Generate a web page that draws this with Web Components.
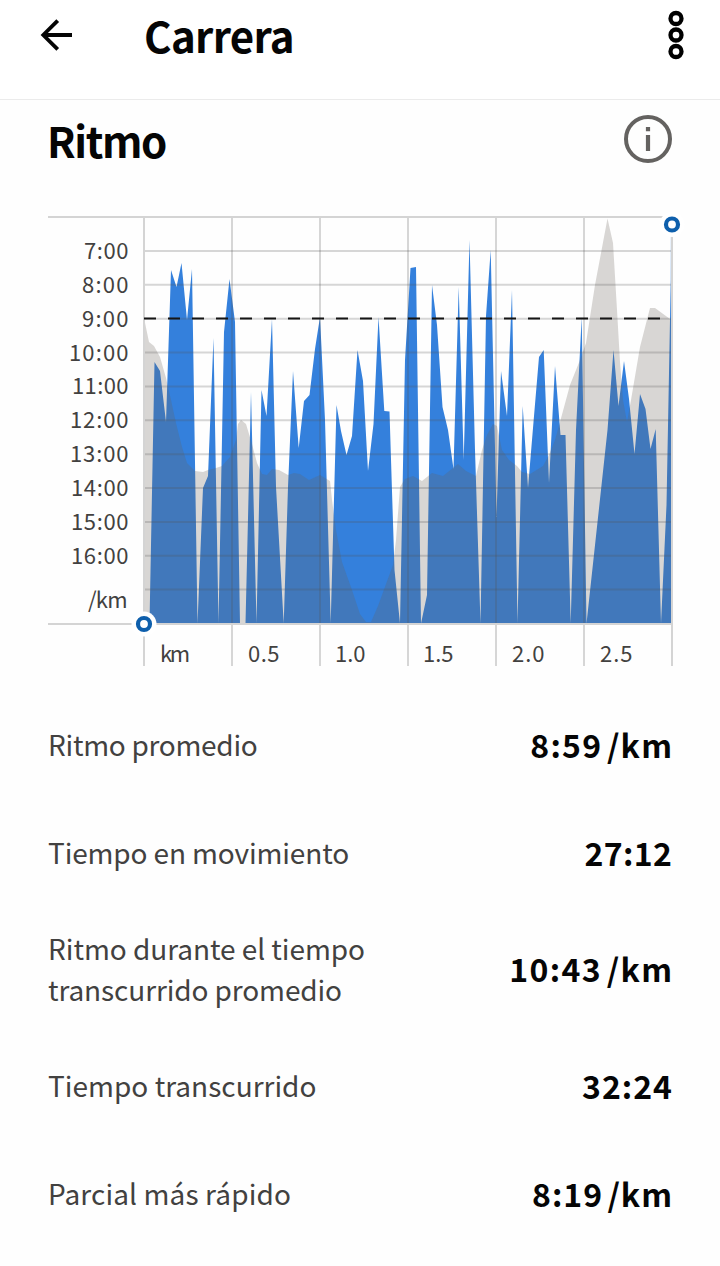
<!DOCTYPE html>
<html lang="es">
<head>
<meta charset="utf-8">
<title>Carrera</title>
<style>
  body { margin: 0; background: #fefefe; font-family: "Noto Sans CJK JP", "Noto Sans", sans-serif; color: #050505; }
</style>
</head>
<body>
<run-screen>
  <app-bar slot="bar"><fit-text width="148">Carrera</fit-text></app-bar>
  <section-title><fit-text width="117">Ritmo</fit-text></section-title>
  <pace-chart></pace-chart>
  <stat-list>
    <stat-row><fit-text width="207.5">Ritmo promedio</fit-text><fit-text slot="value" width="141">8:59 /km</fit-text></stat-row>
    <stat-row><fit-text width="299">Tiempo en movimiento</fit-text><fit-text slot="value" width="86">27:12</fit-text></stat-row>
    <stat-row><fit-text width="315">Ritmo durante el tiempo</fit-text><fit-text width="292">transcurrido promedio</fit-text><fit-text slot="value" width="162">10:43 /km</fit-text></stat-row>
    <stat-row><fit-text width="266.5">Tiempo transcurrido</fit-text><fit-text slot="value" width="89">32:24</fit-text></stat-row>
    <stat-row><fit-text width="241">Parcial más rápido</fit-text><fit-text slot="value" width="139">8:19 /km</fit-text></stat-row>
  </stat-list>
</run-screen>
<script>
const define = (name, html, setup) => customElements.define(name, class extends HTMLElement {
  connectedCallback() {
    if (this.shadowRoot) return;
    this.attachShadow({ mode: "open" }).innerHTML = html;
    if (setup) setup.call(this, this.shadowRoot);
  }
});

define("run-screen", `<style>
  :host { display: flex; flex-direction: column; height: 1266px; overflow: hidden; }
  main { display: flex; flex-direction: column; }
</style><slot name="bar"></slot><main><slot></slot></main>`);

define("app-bar", `<style>
  :host { display: flex; height: 99px; border-bottom: 1px solid #ebebeb; background: #fff; box-sizing: content-box; }
  .back { width: 40px; height: 40px; margin: 15px 0 0 36px; }
  h1 { flex: 1; margin: 5px 0 0 68px; font-size: 42px; line-height: 60px; font-weight: 700; }
  .more { width: 24px; height: 56px; margin: 7px 32px 0 0; }
</style>
<svg class="back" viewBox="0 0 40 40" fill="none" stroke="#050505" stroke-width="3.8"><path d="M36 20H7M21.7 5.6L7.3 20L21.7 34.4"/></svg>
<h1><slot></slot></h1>
<svg class="more" viewBox="0 0 24 56" fill="none" stroke="#000" stroke-width="4.3"><circle cx="12" cy="11.5" r="5.5"/><circle cx="12" cy="28" r="5.5"/><circle cx="12" cy="44.5" r="5.5"/></svg>`);

define("section-title", `<style>
  :host { display: flex; justify-content: space-between; height: 100px; padding: 0 48px 0 47px; }
  h2 { margin: 10px 0 0; font-size: 42px; line-height: 60px; font-weight: 700; }
  svg { width: 48px; height: 48px; margin-top: 15px; }
</style><h2><slot></slot></h2>
<svg viewBox="0 0 48 48"><circle cx="24" cy="24" r="22" fill="none" stroke="#646260" stroke-width="4"/><path d="M21.9 12h4.2v4.2h-4.2zM21.9 20h4.2v16h-4.2z" fill="#646260"/></svg>`);

define("stat-list", `<style>:host { display: flex; flex-direction: column; padding: 0 48px; }</style><slot></slot>`);

define("stat-row", `<style>
  :host { display: flex; align-items: center; justify-content: space-between; min-height: 108px; }
  .label { display: flex; flex-direction: column; align-items: flex-start; font-size: 28px; line-height: 41px; color: #424140; padding: 19.5px 0 23.5px; }
  .value { font-size: 32px; line-height: 41px; font-weight: 700; word-spacing: -4px; padding-bottom: 4px; }
</style><div class="label"><slot></slot></div><div class="value"><slot name="value"></slot></div>`);

/* Text whose tracking is set so that it spans the given advance width. */
define("fit-text", `<style>:host { display: block; white-space: nowrap; width: max-content; }</style><slot></slot>`, function () {
  const range = document.createRange();
  range.selectNodeContents(this);
  const natural = range.getBoundingClientRect().width;
  const count = this.textContent.length;
  const target = +this.getAttribute("width") + 2;
  const tracking = (target - natural) / count;
  this.style.letterSpacing = tracking.toFixed(3) + "px";
  this.style.marginRight = (-tracking).toFixed(3) + "px";
});

define("pace-chart", `<style>
  :host { display: block; height: 492px; }
  svg { display: block; width: 720px; height: 492px; }
  text { font-size: 22px; fill: #424140; }
</style>
<svg viewBox="0 200 720 492">
  <defs><linearGradient id="edge" x1="0" x2="0" y1="225" y2="320" gradientUnits="userSpaceOnUse"><stop offset="0" stop-color="#3480dc" stop-opacity=".1"/><stop offset="1" stop-color="#3480dc" stop-opacity=".7"/></linearGradient></defs>
  <polygon id="pace" fill="#3480dc"/>
  <rect x="670.500" y="236" width="1.5" height="84" fill="url(#edge)"/>
  <polygon id="elevation" fill="#675f57" fill-opacity=".25"/>
  <g id="grid" stroke="#505050" stroke-opacity=".23" stroke-width="2"></g>
  <path d="M48 217H672M48 624H672M144 217V666M672 217V666" stroke="#d4d4d4" stroke-width="2"/>
  <path d="M144 318.4H660" stroke="#151515" stroke-width="2" stroke-dasharray="12 12"/>
  <circle cx="144" cy="624" r="12.5" fill="#fff"/><circle cx="672" cy="224.500" r="12.5" fill="#fff"/>
  <g fill="#fff" stroke="#0e5fac" stroke-width="4.2"><circle cx="144" cy="624" r="6"/><circle cx="672" cy="224.500" r="6"/></g>
  <g id="labels"></g>
</svg>`, function (root) {
  const pace = "149.5,623.5 154.5,362 160,371 166,422 171,270 176.500,287 181.500,263 187,320 192,269 197.500,623.5 203,488 208,476 213.500,338 218.500,623.5 224,332 229.500,279 235,322 240,623.5 245.500,623.5 251,392 256.500,623.5 261.500,390 266.500,416 272,319 276,487 283.700,623.5 288,487 293,371 298.700,448 304,401 309.500,395 315,349 320,317 325,420 330.700,623.5 336.500,405 341,431 346.500,455 352,436 357.500,350 363,381 368,471 373.500,424 378.500,317 384.300,411 389.500,411.500 394.500,570 400,623.5 405,360 410.500,268 416,267 421,623.5 427,595 432,285 437,325 442.500,407 448,430 453.500,469 458.700,287 463.700,460 469.500,240 475,450 480.500,623.5 486,316 490.700,250 496.500,517 501,371 507,416 512,290 517.500,623.5 522.700,406 528,488 533.500,422 539,357 543.700,350 549,483 555,366 560.500,435 565.500,435 570.700,623.5 576,430 581.700,317 586.500,623.5 607.500,430 613.500,350 618.500,406 624,361 629,399 634.500,454 640,394 645.500,409 650.500,449 655.700,429 661,623.5 666.500,505 670,320 671,280 672,280 672,623.5";
  const elevation = "144,318 149,342 154,346 160,357 166,378 171,400 176,423 182,447 187,463 195,471 203,472 208,470 216,468 222,466 230,457 236,440 238,424 241,420 246,424 252,444 257,463 262,474 267,475 272,469 279,470 288,475 294,473 300,474 309,480 320,475 330,481 332,500 336,530 342,562 352,590 360,614 366,622 371,622 378,606 386,584 393,565 396,540 400,487 405,479 413,476 422,481 432,473 443,476 453,468 458,464 466,471 476,476 482,450 487,435 493,424 497,426 502,450 509,460 517,466 522,472 530,474 543,466 549,455 555,440 560,422 570,385 580,360 586,343 595,285 607.500,218.500 613,243 617,310 620,362 623,400 627,422 631,400 640,347 650,308 655,308 670,319 672,319 672,623.5 144,623.5";
  root.getElementById("pace").setAttribute("points", pace);
  root.getElementById("elevation").setAttribute("points", elevation);
  let lines = "";
  for (let i = 0; i < 11; i++) { const y = (251 + i * 33.86).toFixed(2); lines += `<path d="M145 ${y}H671"/>`; }
  for (let x = 232; x < 672; x += 88) lines += `<path d="M${x} 218V623M${x} 625V666"/>`;
  root.getElementById("grid").innerHTML = lines;
  const put = (s, x1, x2, y) => `<text x="${x1 - 1}" y="${y}" textLength="${x2 - x1 + 1.5}">${s}</text>`;
  const starts = [85, 83, 83, 70, 73, 71, 71, 72, 72, 72];
  let labels = starts.map((x, i) => put((i + 7) + ":00", x, 128, (259 + i * 33.86).toFixed(1))).join("");
  labels += put("/km", 89, 127, 608) + `<text x="160" y="662" textLength="30">km</text>`;
  [["0.5", 249, 279], ["1.0", 336, 365], ["1.5", 424, 453], ["2.0", 513, 544], ["2.5", 601, 632]].forEach(([s, a, b]) => labels += put(s, a, b, 662));
  root.getElementById("labels").innerHTML = labels;
});
</script>
</body>
</html>
